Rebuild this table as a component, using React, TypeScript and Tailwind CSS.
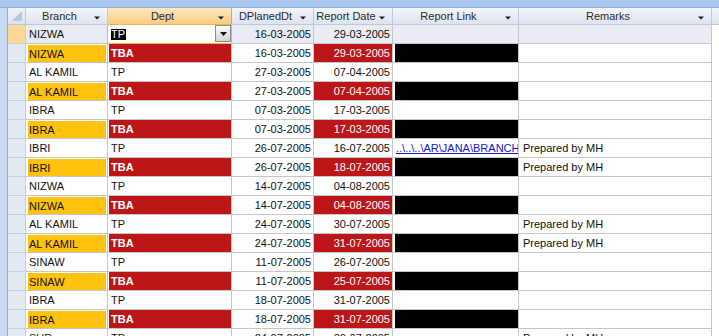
import React from "react";

type Row = {
  branch: string;
  dept: string;
  d1: string;
  d2: string;
  link?: "text";
  remarks?: string;
  tba: boolean;
};

const rows: Row[] = [
  { branch: "NIZWA", dept: "TBA", d1: "16-03-2005", d2: "29-03-2005", tba: true },
  { branch: "AL KAMIL", dept: "TP", d1: "27-03-2005", d2: "07-04-2005", tba: false },
  { branch: "AL KAMIL", dept: "TBA", d1: "27-03-2005", d2: "07-04-2005", tba: true },
  { branch: "IBRA", dept: "TP", d1: "07-03-2005", d2: "17-03-2005", tba: false },
  { branch: "IBRA", dept: "TBA", d1: "07-03-2005", d2: "17-03-2005", tba: true },
  { branch: "IBRI", dept: "TP", d1: "26-07-2005", d2: "16-07-2005", link: "text", remarks: "Prepared by MH", tba: false },
  { branch: "IBRI", dept: "TBA", d1: "26-07-2005", d2: "18-07-2005", remarks: "Prepared by MH", tba: true },
  { branch: "NIZWA", dept: "TP", d1: "14-07-2005", d2: "04-08-2005", tba: false },
  { branch: "NIZWA", dept: "TBA", d1: "14-07-2005", d2: "04-08-2005", tba: true },
  { branch: "AL KAMIL", dept: "TP", d1: "24-07-2005", d2: "30-07-2005", remarks: "Prepared by MH", tba: false },
  { branch: "AL KAMIL", dept: "TBA", d1: "24-07-2005", d2: "31-07-2005", remarks: "Prepared by MH", tba: true },
  { branch: "SINAW", dept: "TP", d1: "11-07-2005", d2: "26-07-2005", tba: false },
  { branch: "SINAW", dept: "TBA", d1: "11-07-2005", d2: "25-07-2005", tba: true },
  { branch: "IBRA", dept: "TP", d1: "18-07-2005", d2: "31-07-2005", tba: false },
  { branch: "IBRA", dept: "TBA", d1: "18-07-2005", d2: "31-07-2005", tba: true },
  { branch: "SUR", dept: "TP", d1: "24-07-2005", d2: "30-07-2005", remarks: "Prepared by MH", tba: false },
];

function Arrow() {
  return (
    <svg className="absolute right-[7px] top-[8px]" width="6" height="4" viewBox="0 0 6 4">
      <path d="M0 0.5h6L3 3.5z" fill="#1e1e1e" />
    </svg>
  );
}

function HeaderCell({ label, active }: { label: string; active?: boolean }) {
  return (
    <div
      className={
        active
          ? "relative flex items-center justify-center pr-[14px] border-r border-b border-[#e2a650] bg-linear-to-b from-[#fde8bf] to-[#f7cc80] text-[11px] text-[#2a2a2a] whitespace-nowrap"
          : "relative flex items-center justify-center pr-[14px] border-r border-b border-[#bccadb] bg-linear-to-b from-[#f4f7fb] to-[#dde4ee] text-[11px] text-[#2a2a2a] whitespace-nowrap"
      }
    >
      <span>{label}</span>
      <Arrow />
    </div>
  );
}

const cellBase = "border-r border-b border-[#c6c6c6] text-[11px] text-[#111] overflow-hidden whitespace-nowrap";

export default function App() {
  return (
    <div className="w-[719px] h-[336px] overflow-hidden bg-white font-['Liberation_Sans',Arial,sans-serif] flex flex-col">
      <div className="h-[8px] shrink-0 bg-[#abc7ed] border-b border-[#8fb0dc]" />
      <div className="flex flex-1 min-h-0">
        <div className="w-[8px] shrink-0 bg-[#c9dbf1] border-r border-[#8fb0dc]" />
        <div className="grid grid-cols-[18px_82px_124px_82px_79px_126px_193px_7px] auto-rows-[19px] [grid-template-rows:17px] content-start">
          {/* header */}
          <div className="relative border-r border-b border-[#bccadb] bg-linear-to-b from-[#eef2f8] to-[#dce4ef]">
            <svg className="absolute left-[3px] top-[2px]" width="12" height="12" viewBox="0 0 12 12">
              <path d="M11 1V11H1z" fill="#b8c6d9" />
            </svg>
          </div>
          <HeaderCell label="Branch" />
          <HeaderCell label="Dept" active />
          <HeaderCell label="DPlanedDt" />
          <HeaderCell label="Report Date" />
          <HeaderCell label="Report Link" />
          <HeaderCell label="Remarks" />
          <div className="border-b border-[#bccadb] bg-linear-to-b from-[#f4f7fb] to-[#dde4ee]" />

          {/* current row */}
          <div className="border-r border-b border-[#c3cfdf] bg-[#fcd89b]" />
          <div className={`${cellBase} bg-[#e9edf3] flex items-center pl-[3px]`}>NIZWA</div>
          <div className="relative border-r border-b border-[#f0b45a] bg-white text-[11px]">
            <div className="absolute -left-px -top-px w-px h-[19px] bg-[#f0b45a]" />
            <div className="absolute -left-px -top-px h-px w-[125px] bg-[#f0b45a]" />
            <div className="flex items-center h-full pl-[3px]">
              <span className="bg-black text-white leading-[11px] pr-px">TP</span>
            </div>
            <div className="absolute right-0 top-0 w-[16px] h-[17px] border border-[#8c8c8c] bg-linear-to-b from-[#fafafa] to-[#d4d4d4] flex items-center justify-center">
              <svg width="7" height="4" viewBox="0 0 7 4">
                <path d="M0 0h7L3.5 4z" fill="#111" />
              </svg>
            </div>
          </div>
          <div className={`${cellBase} bg-[#e9edf3] flex items-center justify-end pr-[2px]`}>16-03-2005</div>
          <div className={`${cellBase} bg-[#e9edf3] flex items-center justify-end pr-[2px]`}>29-03-2005</div>
          <div className={`${cellBase} bg-[#e9edf3]`} />
          <div className={`${cellBase} bg-[#e9edf3]`} />
          <div className="bg-white" />

          {rows.map((r, i) => (
            <React.Fragment key={i}>
              <div className="border-r border-b border-[#c3cfdf] bg-[#e3eaf4]" />
              <div className={`${cellBase} bg-white`}>
                {r.tba ? (
                  <div className="h-full mt-px ml-[2px] mr-px bg-[#ffc20e] flex items-center pl-px">{r.branch}</div>
                ) : (
                  <div className="h-full flex items-center pl-[3px]">{r.branch}</div>
                )}
              </div>
              <div className={`${cellBase} bg-white`}>
                {r.tba ? (
                  <div className="h-full ml-px bg-[#bd1618] text-white font-bold flex items-center pl-[2px]">{r.dept}</div>
                ) : (
                  <div className="h-full flex items-center pl-[3px]">{r.dept}</div>
                )}
              </div>
              <div className={`${cellBase} bg-white flex items-center justify-end pr-[2px]`}>{r.d1}</div>
              <div className={`${cellBase} bg-white`}>
                {r.tba ? (
                  <div className="h-full bg-[#bd1618] text-white flex items-center justify-end pr-[2px]">{r.d2}</div>
                ) : (
                  <div className="h-full flex items-center justify-end pr-[2px]">{r.d2}</div>
                )}
              </div>
              <div className={`${cellBase} bg-white`}>
                {r.tba ? (
                  <div className="h-full ml-[2px] bg-black" />
                ) : r.link ? (
                  <div className="h-full flex items-center pl-[3px] text-[#1414c8] underline">
                    {"..\\..\\..\\AR\\JANA\\BRANCH"}
                  </div>
                ) : null}
              </div>
              <div className={`${cellBase} bg-white flex items-center pl-[4px]`}>{r.remarks ?? ""}</div>
              <div className="bg-white" />
            </React.Fragment>
          ))}
        </div>
      </div>
    </div>
  );
}
